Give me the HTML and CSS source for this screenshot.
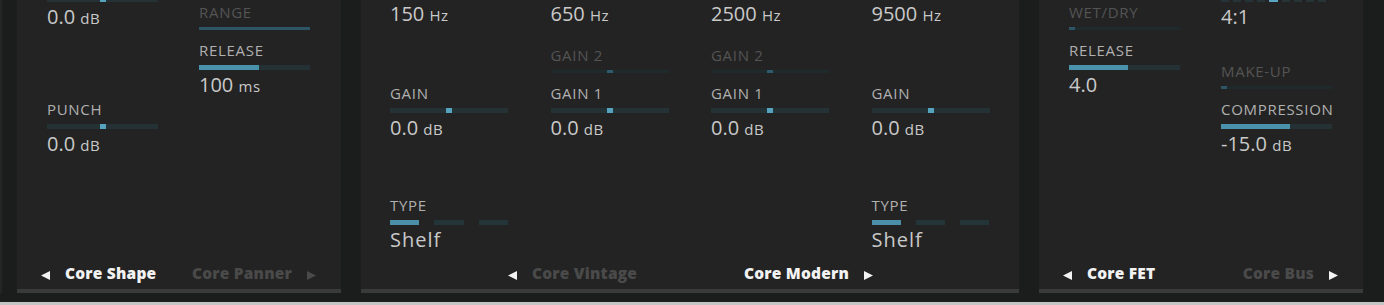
FILE: index.html
```html
<!DOCTYPE html>
<html lang="en">
<head>
  <meta charset="UTF-8">
  <meta name="viewport" content="width=device-width, initial-scale=1.0">
  <title>Core Modules</title>
  <link rel="stylesheet" href="styles.css">
</head>
<body>
  <div class="rack">

    <!-- Core Shape -->
    <section class="panel panel-side">
      <div class="cols">
        <div class="col">
          <div class="ctl">
            <div class="sld top"><span class="knob"></span></div>
            <div class="val">0.0 <small>dB</small></div>
          </div>
          <div class="ctl mt-73">
            <div class="lbl">PUNCH</div>
            <div class="sld"><span class="knob"></span></div>
            <div class="val">0.0 <small>dB</small></div>
          </div>
        </div>
        <div class="col">
          <div class="ctl dim mt-5">
            <div class="lbl">RANGE</div>
            <div class="sld"><span class="fill" style="width: 100%"></span></div>
          </div>
          <div class="ctl mt-13">
            <div class="lbl">RELEASE</div>
            <div class="sld"><span class="fill" style="width: 54%"></span></div>
            <div class="val">100 <small>ms</small></div>
          </div>
        </div>
      </div>
      <nav class="nav">
        <span class="nav-item active">
          <svg class="arrow" width="9" height="9" viewBox="0 0 9 9"><polygon points="9,0 9,9 0,4.5"/></svg>
          Core Shape
        </span>
        <span class="nav-item">
          Core Panner
          <svg class="arrow" width="9" height="9" viewBox="0 0 9 9"><polygon points="0,0 0,9 9,4.5"/></svg>
        </span>
      </nav>
    </section>

    <!-- Core Vintage / Core Modern EQ -->
    <section class="panel panel-eq">
      <div class="cols">
        <div class="col">
          <div class="val mt-3">150 <small>Hz</small></div>
          <div class="ctl mt-60">
            <div class="lbl">GAIN</div>
            <div class="sld"><span class="knob"></span></div>
            <div class="val">0.0 <small>dB</small></div>
          </div>
          <div class="ctl mt-58">
            <div class="lbl">TYPE</div>
            <div class="segs"><span class="on"></span><span></span><span></span></div>
            <div class="val wide">Shelf</div>
          </div>
        </div>
        <div class="col">
          <div class="val mt-3">650 <small>Hz</small></div>
          <div class="ctl dim mt-22">
            <div class="lbl">GAIN 2</div>
            <div class="sld"><span class="knob"></span></div>
          </div>
          <div class="ctl mt-13">
            <div class="lbl">GAIN 1</div>
            <div class="sld"><span class="knob"></span></div>
            <div class="val">0.0 <small>dB</small></div>
          </div>
        </div>
        <div class="col">
          <div class="val mt-3">2500 <small>Hz</small></div>
          <div class="ctl dim mt-22">
            <div class="lbl">GAIN 2</div>
            <div class="sld"><span class="knob"></span></div>
          </div>
          <div class="ctl mt-13">
            <div class="lbl">GAIN 1</div>
            <div class="sld"><span class="knob"></span></div>
            <div class="val">0.0 <small>dB</small></div>
          </div>
        </div>
        <div class="col">
          <div class="val mt-3">9500 <small>Hz</small></div>
          <div class="ctl mt-60">
            <div class="lbl">GAIN</div>
            <div class="sld"><span class="knob"></span></div>
            <div class="val">0.0 <small>dB</small></div>
          </div>
          <div class="ctl mt-58">
            <div class="lbl">TYPE</div>
            <div class="segs"><span class="on"></span><span></span><span></span></div>
            <div class="val wide">Shelf</div>
          </div>
        </div>
      </div>
      <nav class="nav nav-center">
        <span class="nav-item">
          <svg class="arrow lit" width="9" height="9" viewBox="0 0 9 9"><polygon points="9,0 9,9 0,4.5"/></svg>
          Core Vintage
        </span>
        <span class="nav-item active">
          Core Modern
          <svg class="arrow" width="9" height="9" viewBox="0 0 9 9"><polygon points="0,0 0,9 9,4.5"/></svg>
        </span>
      </nav>
    </section>

    <!-- Core FET -->
    <section class="panel panel-side">
      <div class="cols">
        <div class="col">
          <div class="ctl dim mt-5">
            <div class="lbl">WET/DRY</div>
            <div class="sld"><span class="fill" style="width: 5%"></span></div>
          </div>
          <div class="ctl mt-13">
            <div class="lbl">RELEASE</div>
            <div class="sld"><span class="fill" style="width: 53%"></span></div>
            <div class="val">4.0</div>
          </div>
        </div>
        <div class="col">
          <div class="ctl">
            <div class="meter">
              <span></span><span></span><span></span><span></span><span class="on"></span><span></span><span></span><span></span><span></span>
            </div>
            <div class="val">4:1</div>
          </div>
          <div class="ctl dim mt-36">
            <div class="lbl">MAKE-UP</div>
            <div class="sld"><span class="fill" style="width: 5%"></span></div>
          </div>
          <div class="ctl mt-13">
            <div class="lbl">COMPRESSION</div>
            <div class="sld"><span class="fill" style="width: 62%"></span></div>
            <div class="val">-15.0 <small>dB</small></div>
          </div>
        </div>
      </div>
      <nav class="nav">
        <span class="nav-item active">
          <svg class="arrow" width="9" height="9" viewBox="0 0 9 9"><polygon points="9,0 9,9 0,4.5"/></svg>
          Core FET
        </span>
        <span class="nav-item">
          Core Bus
          <svg class="arrow lit" width="9" height="9" viewBox="0 0 9 9"><polygon points="0,0 0,9 9,4.5"/></svg>
        </span>
      </nav>
    </section>

  </div>
</body>
</html>
```

FILE: styles.css
```css
* {
  box-sizing: border-box;
}

body {
  margin: 0;
  height: 305px;
  overflow: hidden;
  background-color: #1b1c1c;
  border-bottom: 3px solid #c3c3c3;
  font-family: "Open Sans", sans-serif;
  color: #c4c4c4;
}

.rack {
  display: flex;
  gap: 20px;
  height: 293px;
  padding-left: 17px;
  border-left: 2px solid #242525;
}

.panel {
  display: flex;
  flex-direction: column;
  background-color: #232323;
  border-bottom: 4px solid #3a3a3a;
}

.panel-side {
  width: 324px;
}

.panel-side:first-child {
  margin-left: -2px;
}

.panel-eq {
  width: 658px;
}

.cols {
  flex: 1;
  display: flex;
  gap: 41px;
  padding-left: 30px;
}

.panel-eq .cols {
  gap: 42.5px;
  padding-left: 29px;
}

.col {
  width: 111px;
  display: flex;
  flex-direction: column;
}

.panel-eq .col {
  width: 118px;
}

/* spacing between controls */
.mt-3 { margin-top: 3px; }
.mt-5 { margin-top: 5px; }
.mt-13 { margin-top: 13px; }
.mt-22 { margin-top: 22px; }
.mt-36 { margin-top: 36px; }
.mt-58 { margin-top: 58px; }
.mt-60 { margin-top: 60px; }
.mt-73 { margin-top: 73px; }

.lbl {
  font-size: 15px;
  line-height: 14px;
  letter-spacing: 0.7px;
  color: #b0b0b0;
  white-space: nowrap;
}

.val {
  margin-top: 4px;
  font-size: 20px;
  line-height: 22px;
  color: #c9c9c9;
  white-space: nowrap;
}

.val.wide {
  letter-spacing: 1px;
}

.val small {
  font-size: 15px;
  letter-spacing: 0.5px;
}

.col > .val:first-child {
  margin-top: 3px;
}

.sld {
  position: relative;
  height: 5px;
  margin-top: 8px;
  background-color: #243135;
}

.sld.top {
  margin-top: -3px;
}

.fill {
  display: block;
  height: 100%;
  background-color: #4a91ac;
}

.knob {
  position: absolute;
  top: 0;
  left: calc(50% - 3px);
  width: 6px;
  height: 100%;
  background-color: #56a3c0;
}

.ctl.dim .lbl {
  color: #545454;
}

.ctl.dim .sld {
  height: 3px;
  background-color: #1f2a2d;
}

.ctl.dim .fill {
  background-color: #2d5565;
}

.ctl.dim .knob {
  background-color: #2e5b6b;
}

.segs {
  display: flex;
  gap: 15px;
  height: 5px;
  margin-top: 8px;
}

.segs span {
  flex: 1;
  background-color: #243539;
}

.segs .on {
  background-color: #4a8ea8;
}

.meter {
  display: flex;
  gap: 4px;
  width: 105px;
  height: 5px;
  margin-top: -3px;
}

.meter span {
  flex: 1;
  background-color: #263438;
}

.meter .on {
  background-color: #5aa5c2;
}

.nav {
  display: flex;
  justify-content: space-between;
  align-items: center;
  height: 20px;
  margin-bottom: 6px;
  padding: 0 25px 0 24px;
  font-size: 15.5px;
  font-weight: 800;
  letter-spacing: 0.2px;
  color: #4a4a4a;
}

.nav-center {
  padding: 0 146px 0 147px;
}

.nav-item {
  display: flex;
  align-items: center;
  gap: 15px;
  white-space: nowrap;
}

.nav-item.active {
  color: #f2f2f2;
}

.arrow {
  margin-top: 4px;
  fill: currentColor;
}

.arrow.lit {
  fill: #f2f2f2;
}
```
